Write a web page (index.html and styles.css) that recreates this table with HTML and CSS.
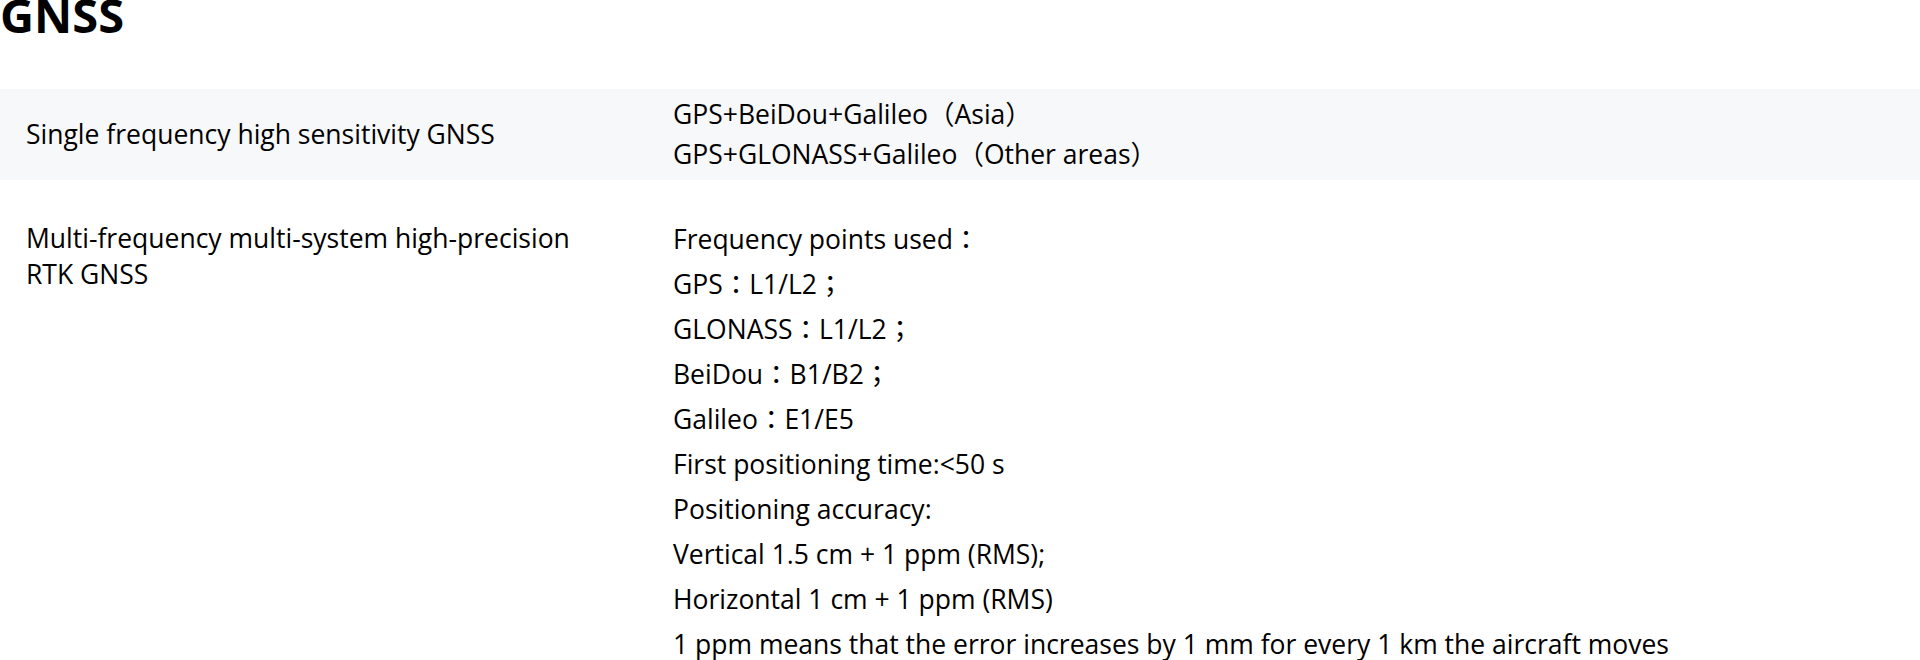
FILE: index.html
```html
<!DOCTYPE html>
<html lang="en">
<head>
<meta charset="utf-8">
<title>GNSS</title>
<link rel="stylesheet" href="styles.css">
</head>
<body>
<section class="spec">
  <h1 class="spec-title">GNSS</h1>
  <div class="spec-table">
    <div class="spec-row spec-row--shaded">
      <div class="spec-label">Single frequency high sensitivity GNSS</div>
      <div class="spec-value spec-value--compact">
        <p>GPS+BeiDou+Galileo（Asia）</p>
        <p>GPS+GLONASS+Galileo（Other areas）</p>
      </div>
    </div>
    <div class="spec-row">
      <div class="spec-label spec-label--top">Multi-frequency multi-system high-precision<br>RTK GNSS</div>
      <div class="spec-value spec-value--list">
        <p>Frequency points used：</p>
        <p>GPS：L1/L2；</p>
        <p>GLONASS：L1/L2；</p>
        <p>BeiDou：B1/B2；</p>
        <p>Galileo：E1/E5</p>
        <p>First positioning time:&lt;50 s</p>
        <p>Positioning accuracy:</p>
        <p>Vertical 1.5 cm + 1 ppm (RMS);</p>
        <p>Horizontal 1 cm + 1 ppm (RMS)</p>
        <p>1 ppm means that the error increases by 1 mm for every 1 km the aircraft moves</p>
      </div>
    </div>
  </div>
</section>
</body>
</html>
```

FILE: styles.css
```css
html, body {
  margin: 0;
  padding: 0;
  background: #ffffff;
}

body {
  font-family: "Open Sans", "Noto Sans CJK TC", sans-serif;
  color: #000000;
  font-size: 26.5px;
}

.spec-title {
  margin: 0 0 59px 0;
  font-size: 47px;
  line-height: 30px;
  font-weight: 700;
}

.spec-table {
  display: flex;
  flex-direction: column;
}

.spec-row {
  display: grid;
  grid-template-columns: 673px 1fr;
}

.spec-row--shaded {
  background: #f7f8fa;
  align-items: center;
  min-height: 91px;
}

.spec-label {
  padding-left: 26px;
  line-height: 35.5px;
}

.spec-label--top {
  padding-top: 41px;
}

.spec-value p {
  margin: 0;
  white-space: nowrap;
}

.spec-value--compact {
  padding: 6px 0;
  line-height: 39.5px;
}

.spec-value--list {
  padding-top: 36.5px;
  line-height: 45px;
}
```
